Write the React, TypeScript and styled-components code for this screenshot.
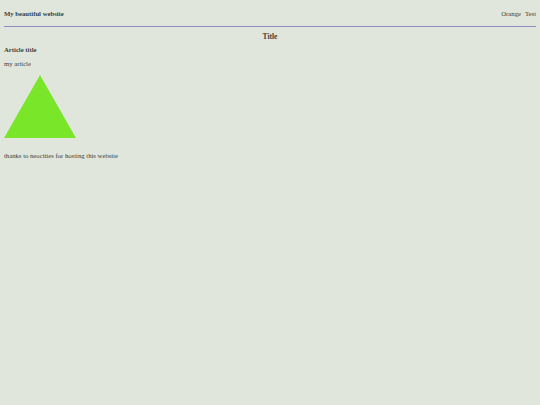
import React from "react";
import styled, { createGlobalStyle } from "styled-components";

const GlobalStyle = createGlobalStyle`
  html, body {
    margin: 0;
    padding: 0;
    background: #e1e6dc;
  }
  body {
    font-family: "Liberation Serif", "Times New Roman", serif;
    font-size: 6.7px;
    color: #3a3f3a;
  }
`;

const Page = styled.div`
  width: 540px;
  min-height: 405px;
  padding: 0 4px;
  box-sizing: border-box;
`;

const Header = styled.header`
  display: flex;
  justify-content: space-between;
  align-items: center;
  height: 26px;
  border-bottom: 1px solid #9089bd;
`;

const SiteName = styled.div`
  font-weight: bold;
`;

const Nav = styled.nav`
  display: flex;
  gap: 4px;
`;

const NavLink = styled.span``;

const PageTitle = styled.h1`
  margin: 0;
  padding-top: 5px;
  font-size: 7.5px;
  text-align: center;
`;

const ArticleTitle = styled.h2`
  margin: 5px 0 0;
  font-size: 6.7px;
`;

const Text = styled.p`
  margin: 7px 0 0;
`;

const Triangle = styled.svg`
  display: block;
  margin-top: 8px;
`;

const Footer = styled.footer`
  margin-top: 14px;
`;

export default function App() {
  return (
    <>
      <GlobalStyle />
      <Page>
        <Header>
          <SiteName>My beautiful website</SiteName>
          <Nav>
            <NavLink>Orange</NavLink>
            <NavLink>Test</NavLink>
          </Nav>
        </Header>
        <PageTitle>Title</PageTitle>
        <article>
          <ArticleTitle>Article title</ArticleTitle>
          <Text>my article</Text>
          <Triangle width="72" height="63" viewBox="0 0 72 63">
            <polygon points="36,0 72,63 0,63" fill="#7ae62a" />
          </Triangle>
        </article>
        <Footer>thanks to neocities for hosting this website</Footer>
      </Page>
    </>
  );
}
